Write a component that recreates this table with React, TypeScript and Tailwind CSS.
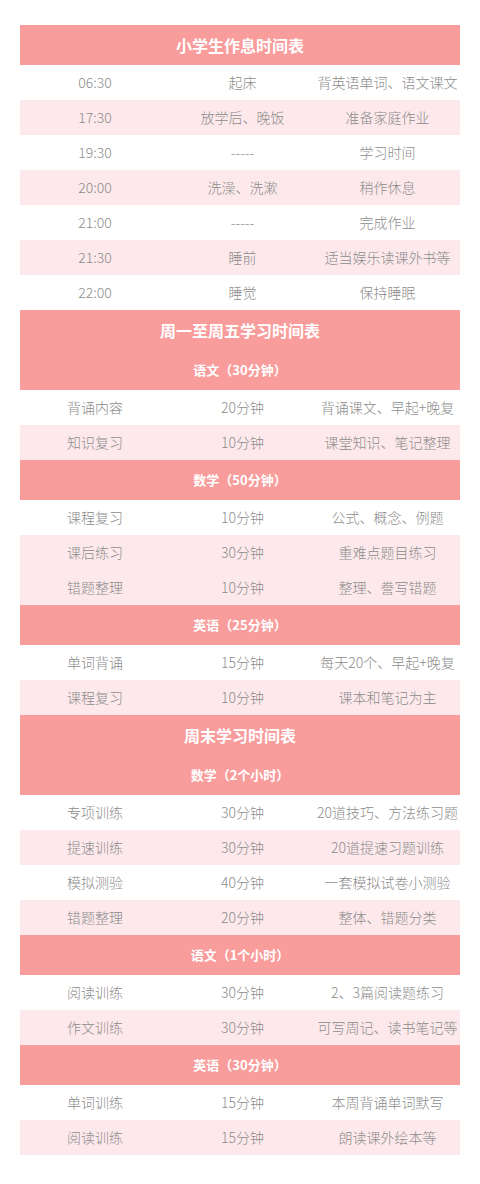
import React from "react";

type Row = { a: string; b: string; c: string; pink?: boolean };
type Block =
  | { kind: "title"; text: string }
  | { kind: "sub"; text: string }
  | { kind: "row"; row: Row };

const blocks: Block[] = [
  { kind: "title", text: "小学生作息时间表" },
  { kind: "row", row: { a: "06:30", b: "起床", c: "背英语单词、语文课文" } },
  { kind: "row", row: { a: "17:30", b: "放学后、晚饭", c: "准备家庭作业", pink: true } },
  { kind: "row", row: { a: "19:30", b: "-----", c: "学习时间" } },
  { kind: "row", row: { a: "20:00", b: "洗澡、洗漱", c: "稍作休息", pink: true } },
  { kind: "row", row: { a: "21:00", b: "-----", c: "完成作业" } },
  { kind: "row", row: { a: "21:30", b: "睡前", c: "适当娱乐读课外书等", pink: true } },
  { kind: "row", row: { a: "22:00", b: "睡觉", c: "保持睡眠" } },
  { kind: "title", text: "周一至周五学习时间表" },
  { kind: "sub", text: "语文（30分钟）" },
  { kind: "row", row: { a: "背诵内容", b: "20分钟", c: "背诵课文、早起+晚复" } },
  { kind: "row", row: { a: "知识复习", b: "10分钟", c: "课堂知识、笔记整理", pink: true } },
  { kind: "sub", text: "数学（50分钟）" },
  { kind: "row", row: { a: "课程复习", b: "10分钟", c: "公式、概念、例题" } },
  { kind: "row", row: { a: "课后练习", b: "30分钟", c: "重难点题目练习", pink: true } },
  { kind: "row", row: { a: "错题整理", b: "10分钟", c: "整理、誊写错题", pink: true } },
  { kind: "sub", text: "英语（25分钟）" },
  { kind: "row", row: { a: "单词背诵", b: "15分钟", c: "每天20个、早起+晚复" } },
  { kind: "row", row: { a: "课程复习", b: "10分钟", c: "课本和笔记为主", pink: true } },
  { kind: "title", text: "周末学习时间表" },
  { kind: "sub", text: "数学（2个小时）" },
  { kind: "row", row: { a: "专项训练", b: "30分钟", c: "20道技巧、方法练习题" } },
  { kind: "row", row: { a: "提速训练", b: "30分钟", c: "20道提速习题训练", pink: true } },
  { kind: "row", row: { a: "模拟测验", b: "40分钟", c: "一套模拟试卷小测验" } },
  { kind: "row", row: { a: "错题整理", b: "20分钟", c: "整体、错题分类", pink: true } },
  { kind: "sub", text: "语文（1个小时）" },
  { kind: "row", row: { a: "阅读训练", b: "30分钟", c: "2、3篇阅读题练习" } },
  { kind: "row", row: { a: "作文训练", b: "30分钟", c: "可写周记、读书笔记等", pink: true } },
  { kind: "sub", text: "英语（30分钟）" },
  { kind: "row", row: { a: "单词训练", b: "15分钟", c: "本周背诵单词默写" } },
  { kind: "row", row: { a: "阅读训练", b: "15分钟", c: "朗读课外绘本等", pink: true } },
];

export default function App() {
  return (
    <div
      className="w-[480px] h-[1184px] bg-white pt-[25px] px-5"
      style={{ fontFamily: '"Noto Sans CJK SC", "Noto Sans", sans-serif' }}
    >
      <div className="flex flex-col w-[440px]">
        {blocks.map((b, i) => {
          if (b.kind === "title")
            return (
              <div
                key={i}
                className="h-10 bg-[#f99c9c] flex items-center justify-center text-white text-[16px] font-bold"
              >
                {b.text}
              </div>
            );
          if (b.kind === "sub")
            return (
              <div
                key={i}
                className="h-10 bg-[#f99c9c] flex items-center justify-center text-white text-[13px] font-bold"
              >
                {b.text}
              </div>
            );
          const r = b.row;
          return (
            <div
              key={i}
              className={
                r.pink
                  ? "h-[35px] grid grid-cols-[150px_145px_145px] items-center bg-[#fde9eb] text-[#8c8c8c] text-[14px] font-light"
                  : "h-[35px] grid grid-cols-[150px_145px_145px] items-center bg-white text-[#8c8c8c] text-[14px] font-light"
              }
            >
              <div className="text-center whitespace-nowrap">{r.a}</div>
              <div className="text-center whitespace-nowrap">{r.b}</div>
              <div className="text-center whitespace-nowrap">{r.c}</div>
            </div>
          );
        })}
      </div>
    </div>
  );
}
